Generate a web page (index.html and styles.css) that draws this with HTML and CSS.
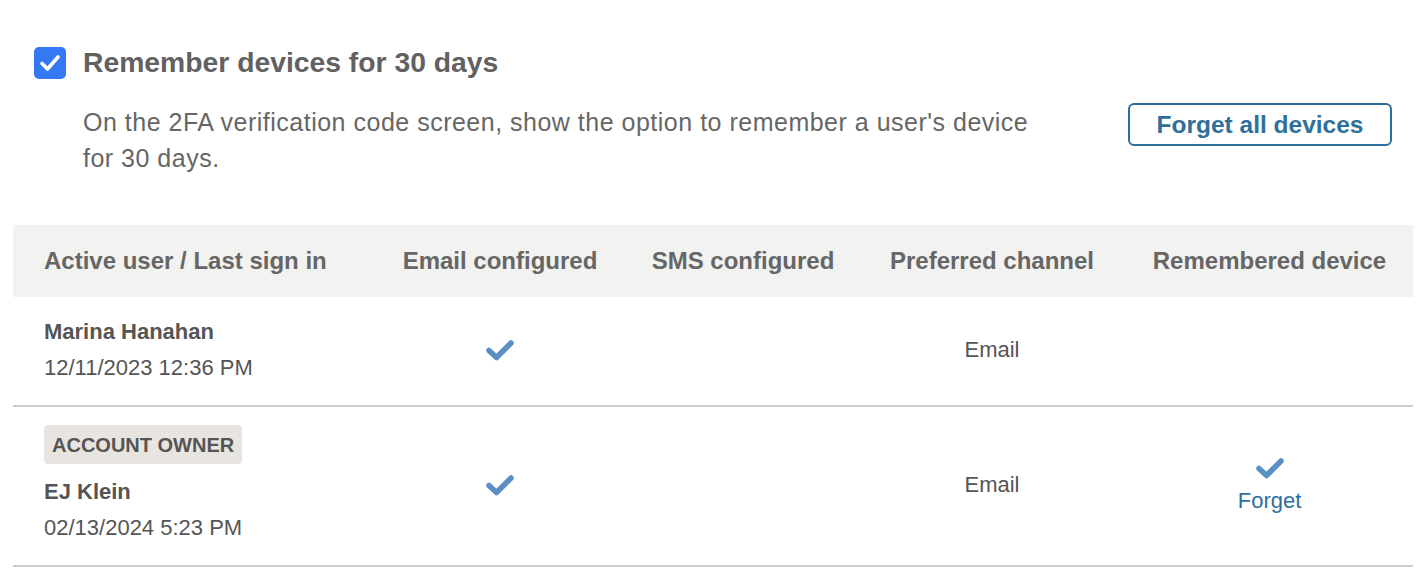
FILE: index.html
```html
<html>
<head>
    <link rel="stylesheet" href="styles.css">
</head>
<body>
    <div class="page">
        <div class="setting">
            <label class="setting-head">
                <span class="checkbox">
                    <svg width="22" height="18" viewBox="0 0 22 18"><path d="M3 9.5 L8.5 15 L19 3" fill="none" stroke="#fff" stroke-width="3.6" stroke-linecap="round" stroke-linejoin="round"/></svg>
                </span>
                <span class="setting-title">Remember devices for 30 days</span>
            </label>
            <div class="setting-body">
                <p class="setting-desc">On the 2FA verification code screen, show the option to remember a user's device for 30 days.</p>
                <button class="btn-outline">Forget all devices</button>
            </div>
        </div>

        <table class="devices">
            <thead>
                <tr>
                    <th class="col-user">Active user / Last sign in</th>
                    <th class="col-email">Email configured</th>
                    <th class="col-sms">SMS configured</th>
                    <th class="col-pref">Preferred channel</th>
                    <th class="col-remember">Remembered device</th>
                </tr>
            </thead>
            <tbody>
                <tr>
                    <td class="col-user">
                        <div class="user-name">Marina Hanahan</div>
                        <div class="user-date">12/11/2023 12:36 PM</div>
                    </td>
                    <td><svg class="check" viewBox="0 0 28 22"><path d="M3 11.5 L10.5 18.5 L25 4" fill="none" stroke="#5a8fc4" stroke-width="5.5" stroke-linecap="round" stroke-linejoin="round"/></svg></td>
                    <td></td>
                    <td>Email</td>
                    <td class="col-remember"></td>
                </tr>
                <tr>
                    <td class="col-user">
                        <span class="badge">ACCOUNT OWNER</span>
                        <div class="user-name">EJ Klein</div>
                        <div class="user-date">02/13/2024 5:23 PM</div>
                    </td>
                    <td><svg class="check" viewBox="0 0 28 22"><path d="M3 11.5 L10.5 18.5 L25 4" fill="none" stroke="#5a8fc4" stroke-width="5.5" stroke-linecap="round" stroke-linejoin="round"/></svg></td>
                    <td></td>
                    <td>Email</td>
                    <td class="col-remember">
                        <svg class="check" viewBox="0 0 28 22"><path d="M3 11.5 L10.5 18.5 L25 4" fill="none" stroke="#5a8fc4" stroke-width="5.5" stroke-linecap="round" stroke-linejoin="round"/></svg>
                        <a class="link" href="#">Forget</a>
                    </td>
                </tr>
            </tbody>
        </table>
    </div>
</body>
</html>
```

FILE: styles.css
```css
body {
    margin: 0;
    background: #fff;
    font-family: "Liberation Sans", Arial, Helvetica, sans-serif;
    color: #555;
}
.page {
    padding: 0 15px 0 13px;
}
.setting {
    padding: 46px 21px 0 21px;
}
.setting-head {
    display: flex;
    align-items: center;
    gap: 17px;
}
.checkbox {
    width: 32px;
    height: 32px;
    border-radius: 5px;
    background: #3478f6;
    display: flex;
    align-items: center;
    justify-content: center;
}
.setting-title {
    font-size: 28.3px;
    font-weight: bold;
    color: #616161;
}
.setting-body {
    display: flex;
    justify-content: space-between;
    align-items: flex-start;
    padding-left: 49px;
    margin-top: 24px;
}
.setting-desc {
    margin: 1px 0 0;
    width: 960px;
    font-size: 25px;
    letter-spacing: 0.5px;
    line-height: 36px;
    color: #666;
}
.btn-outline {
    margin-top: 0;
    width: 264px;
    height: 43px;
    border: 2px solid #2f6f9c;
    border-radius: 6px;
    background: #fff;
    color: #2f6f9c;
    font-family: "Liberation Sans", Arial, sans-serif;
    font-weight: bold;
    font-size: 24.5px;
    padding: 0;
}
.devices {
    margin-top: 49px;
    width: 100%;
    border-collapse: collapse;
    font-size: 22px;
}
.devices th {
    background: #f2f2f1;
    height: 72px;
    font-size: 24px;
    font-weight: bold;
    color: #666;
    text-align: center;
    padding: 0;
}
.devices td {
    text-align: center;
    vertical-align: middle;
    border-bottom: 2px solid #ccc;
    padding: 17px 0 19px;
    color: #555;
}
.devices th.col-user, .devices td.col-user {
    text-align: left;
    padding-left: 31px;
    width: 334px;
}
.col-email { width: 244px; }
.col-sms { width: 242px; }
.col-pref { width: 256px; }
.devices th.col-remember, .devices td.col-remember {
    padding-left: 6px;
}
.user-name {
    font-weight: bold;
    line-height: 36px;
}
.user-date {
    line-height: 36px;
}
.badge {
    display: block;
    width: fit-content;
    margin: 1px 0 10px;
    padding: 0 8px;
    height: 39px;
    line-height: 40px;
    border-radius: 4px;
    background: #e8e5e1;
    font-size: 20px;
    font-weight: bold;
    color: #555;
}
.check {
    width: 28px;
    height: 22px;
    display: block;
    margin: 0 auto;
}
.link {
    display: block;
    margin-top: 9px;
    color: #2f6f9c;
    text-decoration: none;
}
```
